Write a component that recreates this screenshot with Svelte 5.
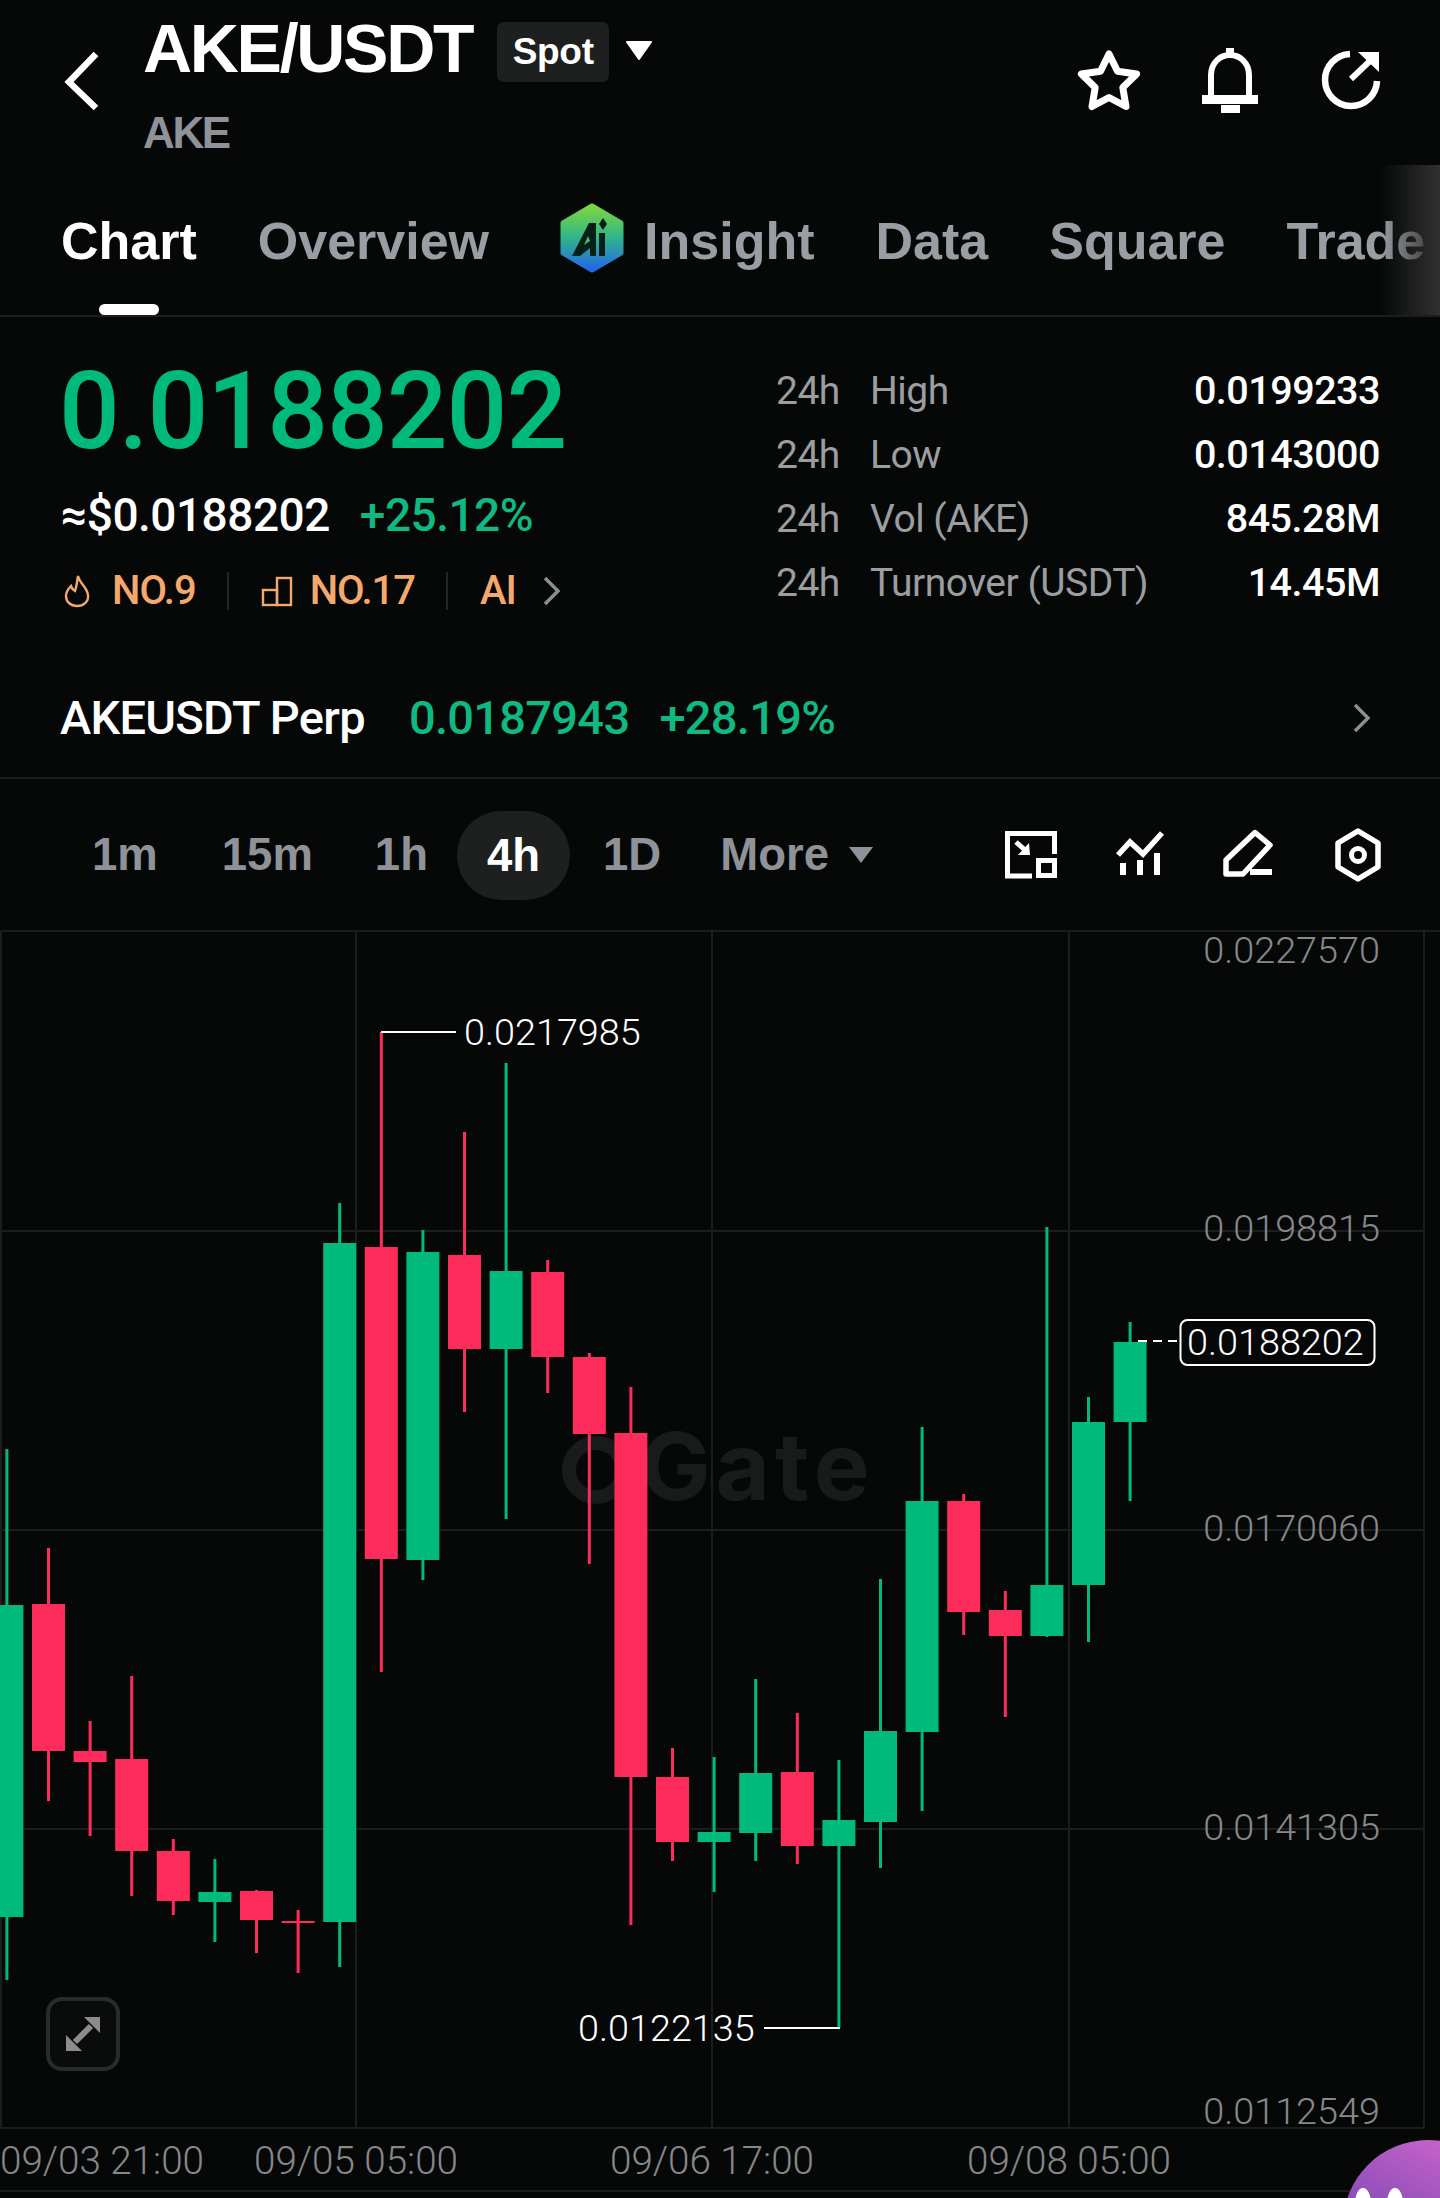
<script>
    const tabs = ["Overview", "Insight", "Data", "Square", "Trade"];
    const intervals = ["1m", "15m", "1h", "4h", "1D"];

    const stats = [
        { name: "High", value: "0.0199233" },
        { name: "Low", value: "0.0143000" },
        { name: "Vol (AKE)", value: "845.28M" },
        { name: "Turnover (USDT)", value: "14.45M" },
    ];

    // wick top, body top, body bottom, wick bottom, up?
    const candles = [
        [1449, 1605, 1917, 1980, true],
        [1548, 1604, 1751, 1801, false],
        [1721, 1751, 1762, 1836, false],
        [1676, 1759, 1851, 1896, false],
        [1839, 1851, 1901, 1915, false],
        [1859, 1892, 1902, 1942, true],
        [1890, 1891, 1920, 1953, false],
        [1910, 1921, 1923, 1973, false],
        [1203, 1243, 1922, 1967, true],
        [1032, 1247, 1559, 1672, false],
        [1230, 1252, 1560, 1580, true],
        [1132, 1255, 1349, 1412, false],
        [1063, 1271, 1349, 1519, true],
        [1260, 1272, 1357, 1393, false],
        [1353, 1357, 1434, 1564, false],
        [1387, 1433, 1777, 1925, false],
        [1748, 1777, 1842, 1861, false],
        [1757, 1832, 1842, 1892, true],
        [1679, 1773, 1833, 1861, true],
        [1713, 1772, 1846, 1864, false],
        [1760, 1820, 1846, 2028, true],
        [1579, 1731, 1822, 1868, true],
        [1427, 1501, 1732, 1811, true],
        [1494, 1501, 1612, 1635, false],
        [1591, 1610, 1636, 1717, false],
        [1227, 1585, 1636, 1637, true],
        [1397, 1422, 1585, 1642, true],
        [1322, 1342, 1422, 1501, true],
    ];

    const priceTicks = [
        { y: 963, label: "0.0227570" },
        { y: 1241, label: "0.0198815" },
        { y: 1541, label: "0.0170060" },
        { y: 1840, label: "0.0141305" },
        { y: 2124, label: "0.0112549" },
    ];

    const timeTicks = [
        { x: 102, label: "09/03 21:00" },
        { x: 356, label: "09/05 05:00" },
        { x: 712, label: "09/06 17:00" },
        { x: 1069, label: "09/08 05:00" },
    ];
</script>

<div class="page">
    <header class="top">
        <svg class="back" viewBox="0 0 40 62" width="40" height="62">
            <polyline points="34,4 7,32 34,58" fill="none" stroke="#fff" stroke-width="6.5" />
        </svg>
        <div class="names">
            <div class="pair">
                <span class="symbol">AKE/USDT</span>
                <span class="badge">Spot</span>
                <svg class="caret" viewBox="0 0 28 20" width="28" height="20">
                    <polygon points="2,2 26,2 14,19" fill="#fff" stroke="#fff" stroke-width="2" stroke-linejoin="round" />
                </svg>
            </div>
            <div class="base">AKE</div>
        </div>
        <div class="actions">
            <svg viewBox="0 0 70 70" width="70" height="70">
                <polygon
                    points="35,9 43.5,26.3 62.6,29 48.8,42.5 52,61.5 35,52.5 18,61.5 21.2,42.5 7.4,29 26.5,26.3"
                    fill="none"
                    stroke="#fff"
                    stroke-width="7"
                    stroke-linejoin="round"
                />
            </svg>
            <svg viewBox="0 0 70 70" width="70" height="70">
                <rect x="31" y="3" width="8" height="8" fill="#fff" />
                <path d="M16 52V30C16 18 25 10 35 10C45 10 54 18 54 30V52" fill="none" stroke="#fff" stroke-width="6" />
                <rect x="7" y="50" width="56" height="9" fill="#fff" />
                <rect x="26" y="60" width="19" height="8" fill="#fff" />
            </svg>
            <svg viewBox="0 0 70 70" width="70" height="70">
                <path d="M34 9A26 26 0 1 0 61 36" fill="none" stroke="#fff" stroke-width="6.5" />
                <line x1="35" y1="34" x2="55" y2="15" stroke="#fff" stroke-width="6" />
                <polygon points="42,7 63,7 63,27" fill="#fff" />
            </svg>
        </div>
    </header>

    <nav class="tabs">
        <span class="tab active">Chart</span>
        {#each tabs as tab}
            <span class="tab">
                {#if tab === "Insight"}
                    <svg class="ai" viewBox="0 0 64 70" width="64" height="70">
                        <defs>
                            <linearGradient id="aiFill" x1="0" y1="0" x2="0" y2="1">
                                <stop offset="0" stop-color="#7fd63f" />
                                <stop offset="0.5" stop-color="#2fb58a" />
                                <stop offset="1" stop-color="#2466e8" />
                            </linearGradient>
                        </defs>
                        <polygon points="32,3 61,20 61,50 32,67 3,50 3,20" fill="url(#aiFill)" stroke="url(#aiFill)" stroke-width="5" stroke-linejoin="round" />
                        <polygon points="29,20 36,20 36,53 30,53 30,45 20,53 12,53" fill="#062018" />
                        <polygon points="28,33 24,42 30,38" fill="#4fb877" />
                        <rect x="39" y="30" width="6" height="23" fill="#062018" />
                        <polygon points="43,15 47,21 43,27 39,21" fill="#062018" />
                    </svg>
                {/if}
                {tab}
            </span>
        {/each}
        <div class="fade"></div>
    </nav>

    <section class="summary">
        <div class="quote">
            <div class="last">0.0188202</div>
            <div class="sub">
                <span>≈$0.0188202</span>
                <span class="up">+25.12%</span>
            </div>
            <div class="ranks">
                <svg class="flame" viewBox="0 0 28 34" width="28" height="34">
                    <path d="M15 2C17 10 24 13 25 21C26 28 20 32 14 32C8 32 3 28 3 22C3 18 5 15 8 12C9 15 10 16 12 17C14 12 14 7 15 2Z" fill="none" stroke="#f5a86c" stroke-width="2.4" />
                </svg>
                <span class="rank">NO.9</span>
                <i class="sep"></i>
                <svg viewBox="0 0 32 32" width="32" height="32">
                    <rect x="2" y="15" width="14" height="15" fill="none" stroke="#f5a86c" stroke-width="2.4" />
                    <rect x="16" y="3" width="14" height="27" fill="none" stroke="#f5a86c" stroke-width="2.4" />
                </svg>
                <span class="rank">NO.17</span>
                <i class="sep"></i>
                <span class="rank">AI</span>
                <svg class="more-ai" viewBox="0 0 20 32" width="20" height="32">
                    <polyline points="3,3 16,16 3,29" fill="none" stroke="#8d8f92" stroke-width="3.4" />
                </svg>
            </div>
        </div>
        <div class="stats">
            {#each stats as stat}
                <div class="stat">
                    <span class="period">24h</span>
                    <span class="name">{stat.name}</span>
                    <span class="value">{stat.value}</span>
                </div>
            {/each}
        </div>
    </section>

    <div class="perp">
        <span class="perp-name">AKEUSDT Perp</span>
        <span class="up">0.0187943</span>
        <span class="up">+28.19%</span>
        <svg class="perp-go" viewBox="0 0 20 32" width="20" height="32">
            <polyline points="3,3 16,16 3,29" fill="none" stroke="#8d8f92" stroke-width="3.4" />
        </svg>
    </div>

    <div class="toolbar">
        {#each intervals as item}
            <span class="interval" class:current={item === "4h"}>{item}</span>
        {/each}
        <span class="interval more">More</span>
        <svg class="more-caret" viewBox="0 0 24 16" width="24" height="16">
            <polygon points="0,0 24,0 12,16" fill="#8f9299" />
        </svg>
        <div class="tools">
            <svg viewBox="0 0 60 60" width="60" height="60">
                <path d="M31 51H6.5V8.5H53.5V29" fill="none" stroke="#fff" stroke-width="5" />
                <rect x="37.5" y="35.5" width="16" height="15" fill="none" stroke="#fff" stroke-width="5" />
                <line x1="15" y1="17" x2="25" y2="26" stroke="#fff" stroke-width="5" />
                <polygon points="28,18 29,30 17,30" fill="#fff" />
            </svg>
            <svg viewBox="0 0 60 60" width="60" height="60">
                <polyline points="8,30 20,17 33,29 52,8" fill="none" stroke="#fff" stroke-width="5.5" />
                <rect x="10" y="38" width="6" height="12" fill="#fff" />
                <rect x="27" y="35" width="6" height="15" fill="#fff" />
                <rect x="44" y="28" width="6" height="22" fill="#fff" />
            </svg>
            <svg viewBox="0 0 60 60" width="60" height="60">
                <path d="M36 7.5L51 20L24 49H7V35Z" fill="none" stroke="#fff" stroke-width="5.5" stroke-linejoin="round" />
                <rect x="31" y="44" width="22" height="6" fill="#fff" />
            </svg>
            <svg viewBox="0 0 60 60" width="60" height="60">
                <polygon points="30,6 50,18 50,42 30,54 10,42 10,18" fill="none" stroke="#fff" stroke-width="5.5" stroke-linejoin="round" />
                <circle cx="30" cy="30" r="6.5" fill="none" stroke="#fff" stroke-width="5" />
            </svg>
        </div>
    </div>

    <!-- canvas uses page coordinates through the viewBox -->
    <svg class="chart" viewBox="0 931 1440 1267" width="1440" height="1267">
        <defs>
            <linearGradient id="botFill" x1="0.8" y1="0" x2="0.3" y2="1">
                <stop offset="0" stop-color="#d066cc" />
                <stop offset="0.6" stop-color="#8a4db8" />
                <stop offset="1" stop-color="#6d45b0" />
            </linearGradient>
        </defs>

        <g class="watermark">
            <circle cx="596" cy="1470" r="27" fill="none" stroke="#181a1c" stroke-width="14" />
            <text x="640" y="1500">Gate</text>
        </g>

        <g class="grid">
            <line x1="0" y1="931" x2="1440" y2="931" />
            <line x1="0" y1="1231" x2="1424" y2="1231" />
            <line x1="0" y1="1530" x2="1424" y2="1530" />
            <line x1="0" y1="1829" x2="1424" y2="1829" />
            <line x1="0" y1="2128" x2="1424" y2="2128" />
            <line x1="0" y1="2191" x2="1440" y2="2191" />
            <line x1="1" y1="931" x2="1" y2="2128" />
            <line x1="356" y1="931" x2="356" y2="2128" />
            <line x1="712" y1="931" x2="712" y2="2128" />
            <line x1="1069" y1="931" x2="1069" y2="2128" />
            <line x1="1424" y1="931" x2="1424" y2="2128" />
        </g>

        {#each candles as [wickTop, bodyTop, bodyBottom, wickBottom, rising], i}
            {@const x = 6.9 + 41.6 * i}
            <g class={rising ? "rising" : "falling"}>
                <rect x={x - 1.5} y={wickTop} width="3" height={wickBottom - wickTop} />
                <rect x={x - 16.5} y={bodyTop} width="33" height={bodyBottom - bodyTop} />
            </g>
        {/each}

        {#each priceTicks as tick}
            <text class="tick" x="1380" y={tick.y} text-anchor="end">{tick.label}</text>
        {/each}
        {#each timeTicks as tick}
            <text class="tick time" x={tick.x} y="2174" text-anchor="middle">{tick.label}</text>
        {/each}

        <line class="callout" x1="381" y1="1032" x2="456" y2="1032" />
        <text class="mark" x="464" y="1045">0.0217985</text>
        <line class="callout" x1="764" y1="2028" x2="840" y2="2028" />
        <text class="mark" x="578" y="2041">0.0122135</text>

        <line class="callout" x1="1138" y1="1341" x2="1180" y2="1341" stroke-dasharray="9 6" />
        <rect class="price-tag" x="1180.5" y="1320" width="194" height="45" rx="7" />
        <text class="mark" x="1187" y="1355">0.0188202</text>

        <rect class="expand" x="48" y="1999" width="70" height="70" rx="14" />
        <g class="expand-arrows">
            <polygon points="84,2017 100,2017 100,2033" />
            <polygon points="82,2051 66,2051 66,2035" />
            <line x1="91" y1="2026" x2="75" y2="2042" />
        </g>

        <circle cx="1428" cy="2225" r="85" fill="url(#botFill)" />
        <ellipse cx="1363" cy="2203" rx="8" ry="15" fill="#fff" />
        <ellipse cx="1395" cy="2203" rx="8" ry="15" fill="#fff" />
    </svg>
</div>

<style>
    :global(body) {
        margin: 0;
        background: #060808;
    }

    .page {
        position: relative;
        width: 1440px;
        height: 2198px;
        overflow: hidden;
        background: #060808;
        color: #fff;
        font-family: "Liberation Sans", Arial, sans-serif;
    }

    .top {
        display: flex;
        height: 165px;
        padding: 0 54px 0 62px;
        box-sizing: border-box;
    }

    .back {
        margin-top: 50px;
        flex-shrink: 0;
    }

    .names {
        margin-left: 41px;
    }

    .pair {
        display: flex;
        align-items: flex-start;
    }

    .symbol {
        font-size: 68px;
        line-height: 96px;
        font-weight: 700;
        letter-spacing: -2.3px;
    }

    .badge {
        margin: 22px 0 0 25px;
        width: 112px;
        height: 60px;
        border-radius: 7px;
        background: #1e2020;
        font-size: 37px;
        font-weight: 700;
        line-height: 60px;
        text-align: center;
        letter-spacing: -0.3px;
    }

    .caret {
        margin: 40px 0 0 16px;
    }

    .base {
        margin-top: 12px;
        font-size: 44px;
        line-height: 50px;
        font-weight: 700;
        letter-spacing: -2.4px;
        color: #8f9299;
    }

    .actions {
        display: flex;
        gap: 51px;
        margin: 45px 0 0 auto;
        height: 70px;
    }

    .tabs {
        position: relative;
        display: flex;
        gap: 61px;
        height: 152px;
        box-sizing: border-box;
        padding: 41px 0 0 61px;
        border-bottom: 2px solid #1c1e1e;
        font-size: 52px;
        line-height: 70px;
        font-weight: 700;
        color: #9a9da3;
    }

    .tab {
        position: relative;
        display: flex;
        align-items: flex-start;
        height: 70px;
        white-space: nowrap;
    }

    .tab.active {
        color: #fff;
    }

    .tab.active::after {
        content: "";
        position: absolute;
        left: 38px;
        top: 98px;
        width: 60px;
        height: 11px;
        border-radius: 6px;
        background: #fff;
    }

    .ai {
        margin: -3px 20px 0 10px;
    }

    .fade {
        position: absolute;
        right: 0;
        top: 0;
        width: 60px;
        height: 150px;
        background: linear-gradient(90deg, rgba(48, 48, 48, 0), #303030);
    }

    .summary {
        display: flex;
        height: 343px;
        font-family: Roboto, "Liberation Sans", sans-serif;
    }

    .quote {
        width: 714px;
        padding: 35px 0 0 59px;
        box-sizing: border-box;
    }

    .last {
        font-size: 107px;
        line-height: 120px;
        font-weight: 500;
        letter-spacing: -1px;
        color: #00ba7c;
    }

    .sub {
        display: flex;
        gap: 30px;
        margin: 18px 0 0 2px;
        font-size: 46px;
        line-height: 50px;
        font-weight: 500;
        letter-spacing: -0.5px;
    }

    .up {
        color: #10b981;
    }

    .ranks {
        display: flex;
        align-items: center;
        margin: 29px 0 0 4px;
        height: 44px;
    }

    .flame {
        margin-right: 4px;
    }

    .rank {
        margin-left: 17px;
        font-size: 40px;
        line-height: 44px;
        font-weight: 500;
        letter-spacing: -1px;
        color: #f5a86c;
    }

    .sep {
        width: 2px;
        height: 38px;
        margin: 0 32px 0 31px;
        background: #242626;
    }

    .sep + .rank {
        margin-left: 0;
    }

    .more-ai {
        margin-left: 26px;
    }

    .stats {
        flex: 1;
        padding: 42px 60px 0 62px;
    }

    .stat {
        display: flex;
        font-size: 39px;
        line-height: 64px;
        color: #9b9da0;
        letter-spacing: -0.5px;
        font-weight: 400;
    }

    .period {
        width: 94px;
    }

    .value {
        margin-left: auto;
        color: #fff;
        font-weight: 500;
        font-size: 39.5px;
    }

    .perp {
        display: flex;
        align-items: center;
        gap: 44px;
        height: 119px;
        padding: 0 68px 2px 60px;
        border-bottom: 2px solid #1c1e1e;
        box-sizing: border-box;
        font-family: Roboto, "Liberation Sans", sans-serif;
        font-size: 47px;
        font-weight: 500;
        letter-spacing: -0.7px;
    }

    .perp .up + .up {
        margin-left: -14px;
    }

    .perp-go {
        margin-left: auto;
    }

    .toolbar {
        display: flex;
        align-items: center;
        gap: 62px;
        height: 152px;
        padding: 0 52px 0 92px;
        box-sizing: border-box;
        font-size: 45.5px;
        font-weight: 700;
        color: #8f9299;
    }

    .interval:nth-child(2) {
        margin-left: 2px;
    }

    .interval.current {
        height: 89px;
        margin: 0 -29px 0 -33px;
        padding: 0 30px;
        border-radius: 45px;
        background: #1e2020;
        color: #fff;
        line-height: 89px;
    }

    .interval.more {
        margin-left: -3px;
    }

    .more-caret {
        margin-left: -42px;
    }

    .tools {
        display: flex;
        gap: 49px;
        margin-left: auto;
    }

    .chart {
        display: block;
        overflow: visible;
    }

    .grid line {
        stroke: #1c1e1e;
        stroke-width: 2;
    }

    .watermark text {
        font-family: Inter, "Liberation Sans", sans-serif;
        font-size: 94px;
        font-weight: 700;
        letter-spacing: 5px;
        fill: #181a1c;
    }

    .rising rect {
        fill: #00ba7c;
    }

    .falling rect {
        fill: #fe2c5a;
    }

    .tick {
        font-family: Roboto, "Liberation Sans", sans-serif;
        font-size: 37.8px;
        font-weight: 300;
        fill: #86888a;
    }

    .tick.time {
        font-size: 38.6px;
    }

    .mark {
        font-family: Roboto, "Liberation Sans", sans-serif;
        font-size: 37.8px;
        font-weight: 300;
        fill: #fff;
    }

    .callout {
        stroke: #fff;
        stroke-width: 2;
    }

    .price-tag {
        fill: none;
        stroke: #fff;
        stroke-width: 2;
    }

    .expand {
        fill: #0a0c0c;
        stroke: #2a2c2c;
        stroke-width: 4;
    }

    .expand-arrows polygon {
        fill: #8c8c8c;
    }

    .expand-arrows line {
        stroke: #8c8c8c;
        stroke-width: 6;
    }
</style>
